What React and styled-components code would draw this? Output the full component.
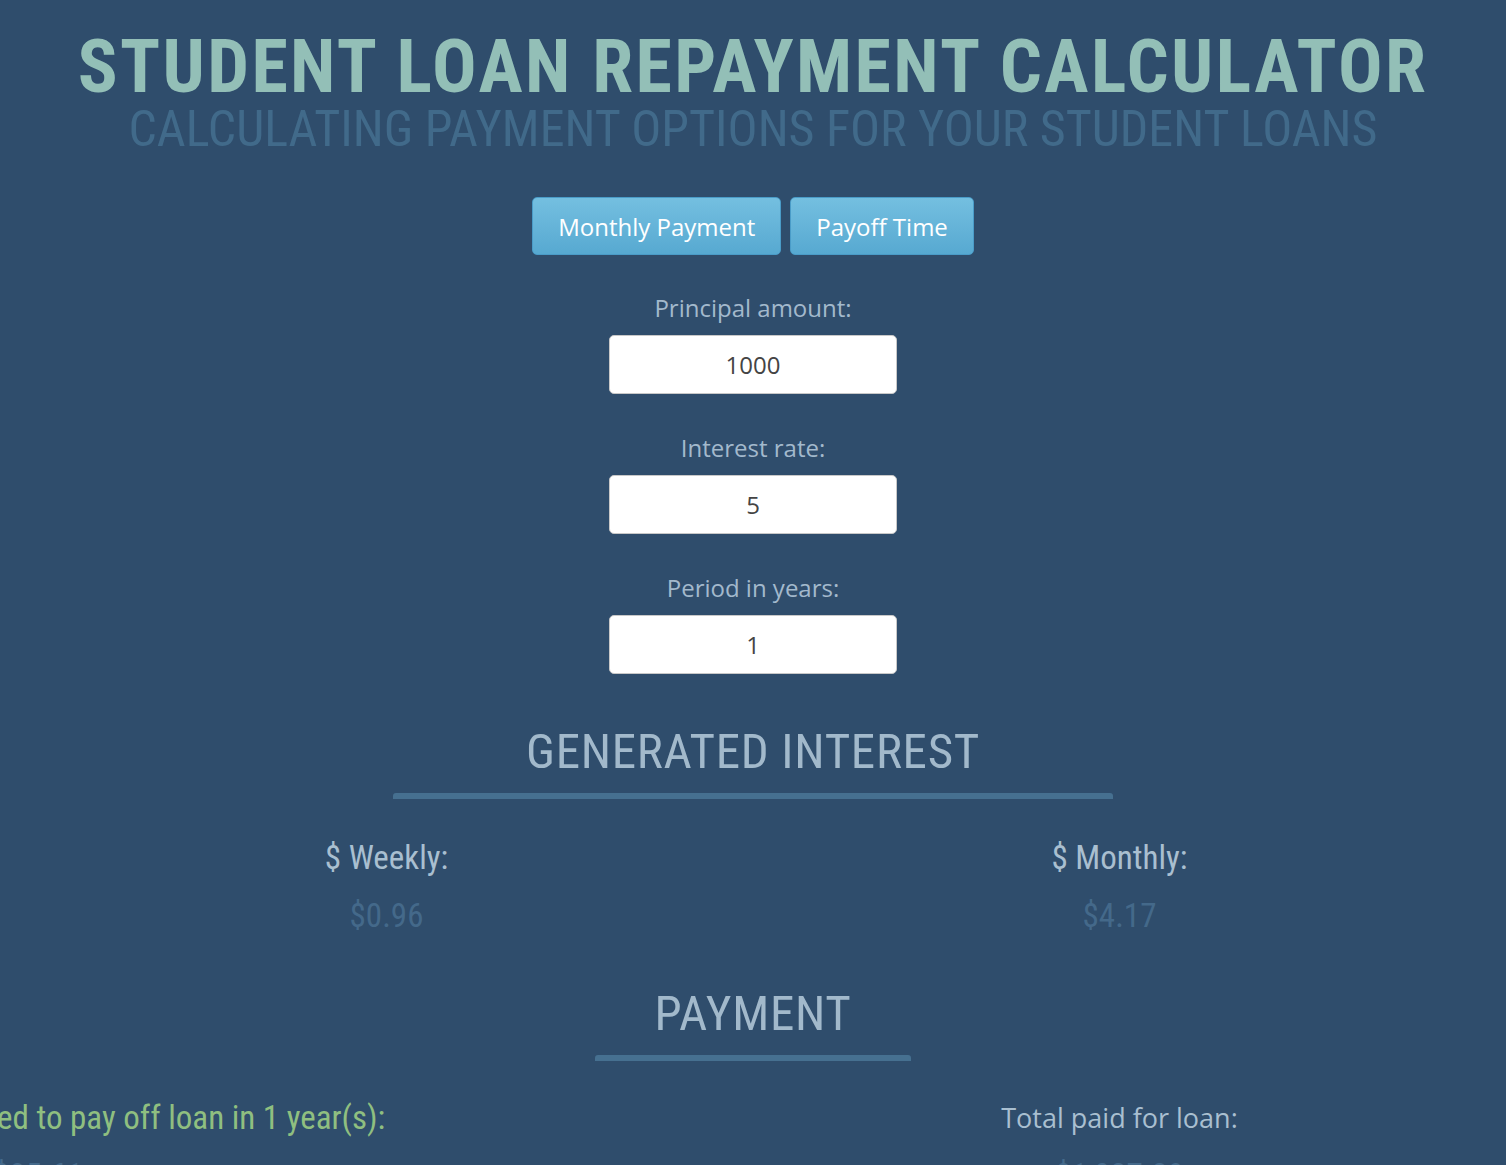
import React, { useState } from 'react';
import styled, { createGlobalStyle } from 'styled-components';

// Styled Components

const GlobalStyle = createGlobalStyle`
  html, body {
    margin: 0;
    padding: 0;
    background: #2f4d6c;
  }
  body {
    font-family: 'Open Sans', 'Noto Sans', sans-serif;
    overflow: hidden;
  }
`;

const condensed = `'Roboto Condensed', 'DejaVu Sans Condensed', 'Liberation Sans Narrow', sans-serif`;

const Page = styled.div`
  min-height: 1165px;
  background: #2f4d6c;
  text-align: center;
  padding-top: 30px;
  box-sizing: border-box;
`;

const Title = styled.h1`
  margin: 0;
  font-family: ${condensed};
  font-weight: 700;
  font-size: 74px;
  line-height: 74px;
  letter-spacing: 2.4px;
  color: #93bfb7;
`;

const Subtitle = styled.h2`
  margin: 0;
  font-family: ${condensed};
  font-weight: 400;
  font-size: 50px;
  line-height: 50px;
  color: #416a8a;
`;

const Tabs = styled.div`
  display: flex;
  justify-content: center;
  gap: 9px;
  margin-top: 43px;
`;

const TabButton = styled.button`
  height: 58px;
  padding: 0 25px;
  border: 1px solid #4a9cc8;
  border-radius: 5px;
  background: linear-gradient(to bottom, #74bfe0, #57a9d1);
  color: #fff;
  font-family: 'Open Sans', sans-serif;
  font-weight: 500;
  font-size: 24px;
  cursor: pointer;
`;

const Form = styled.div`
  display: flex;
  flex-direction: column;
  align-items: center;
  gap: 38px;
  margin-top: 37px;
`;

const Field = styled.div`
  display: flex;
  flex-direction: column;
  align-items: center;
`;

const Label = styled.label`
  font-size: 24px;
  font-weight: 500;
  line-height: 32px;
  color: #a3b9cc;
  margin-bottom: 11px;
`;

const Input = styled.input`
  width: 288px;
  height: 59px;
  box-sizing: border-box;
  border: 1px solid #c8c8c8;
  border-radius: 5px;
  background: #fff;
  text-align: center;
  font-family: 'Open Sans', sans-serif;
  font-size: 24px;
  color: #444;
  outline: none;
`;

const Section = styled.section`
  margin-top: ${(p) => p.$top || 0}px;
`;

const SectionTitle = styled.h3`
  margin: 0;
  font-family: ${condensed};
  font-weight: 400;
  font-size: 49px;
  line-height: 56px;
  letter-spacing: 0.7px;
  color: #a2b9cb;
`;

const Bar = styled.div`
  width: ${(p) => p.$width}px;
  height: 6px;
  margin: 13px auto 0;
  border-radius: 3px 3px 0 0;
  background: #467090;
`;

const Columns = styled.div`
  display: grid;
  grid-template-columns: 1fr 1fr;
  padding: 0 20px;
  margin-top: ${(p) => p.$top || 0}px;
`;

const Cell = styled.div`
  display: flex;
  flex-direction: column;
  align-items: center;
  white-space: nowrap;
  ${(p) => p.$wide && 'margin-left: -697px;'}
`;

const CellLabel = styled.div`
  font-family: ${(p) => (p.$plain ? `'Open Sans', sans-serif` : condensed)};
  font-weight: ${(p) => (p.$plain ? 500 : 400)};
  font-size: ${(p) => (p.$plain ? 27 : 33)}px;
  line-height: 40px;
  color: ${(p) => (p.$green ? '#8fbf80' : '#a9bfd0')};
`;

const CellValue = styled.div`
  font-family: ${condensed};
  font-size: 33px;
  line-height: 40px;
  margin-top: 18px;
  color: #44698a;
`;

// Main Component

export default function App() {
  const [principal, setPrincipal] = useState('1000');
  const [rate, setRate] = useState('5');
  const [years, setYears] = useState('1');

  return (
    <Page>
      <GlobalStyle />
      <Title>STUDENT LOAN REPAYMENT CALCULATOR</Title>
      <Subtitle>CALCULATING PAYMENT OPTIONS FOR YOUR STUDENT LOANS</Subtitle>

      <Tabs>
        <TabButton>Monthly Payment</TabButton>
        <TabButton>Payoff Time</TabButton>
      </Tabs>

      <Form>
        <Field>
          <Label>Principal amount:</Label>
          <Input value={principal} onChange={(e) => setPrincipal(e.target.value)} />
        </Field>
        <Field>
          <Label>Interest rate:</Label>
          <Input value={rate} onChange={(e) => setRate(e.target.value)} />
        </Field>
        <Field>
          <Label>Period in years:</Label>
          <Input value={years} onChange={(e) => setYears(e.target.value)} />
        </Field>
      </Form>

      <Section $top={50}>
        <SectionTitle>GENERATED INTEREST</SectionTitle>
        <Bar $width={720} />
        <Columns $top={39}>
          <Cell>
            <CellLabel>$ Weekly:</CellLabel>
            <CellValue>$0.96</CellValue>
          </Cell>
          <Cell>
            <CellLabel>$ Monthly:</CellLabel>
            <CellValue>$4.17</CellValue>
          </Cell>
        </Columns>
      </Section>

      <Section $top={50}>
        <SectionTitle>PAYMENT</SectionTitle>
        <Bar $width={316} />
        <Columns $top={37}>
          <Cell $wide>
            <CellLabel $green>Monthly payment required to pay off loan in 1 year(s):</CellLabel>
            <CellValue>$85.61</CellValue>
          </Cell>
          <Cell>
            <CellLabel $plain>Total paid for loan:</CellLabel>
            <CellValue>$1,027.29</CellValue>
          </Cell>
        </Columns>
      </Section>
    </Page>
  );
}
